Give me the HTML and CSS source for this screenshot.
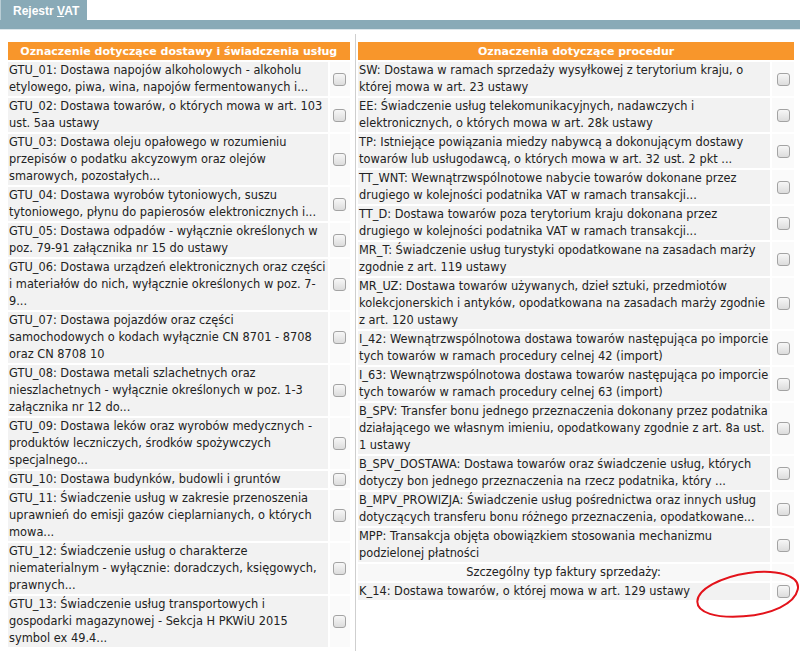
FILE: index.html
```html
<!DOCTYPE html>
<html lang="pl">
<head>
<meta charset="utf-8">
<title>Rejestr VAT</title>
<link rel="stylesheet" href="styles.css">
</head>
<body>
<div class="page">
  <div class="tabs">
    <div class="tab">Rejestr <u>V</u>AT</div>
  </div>
  <div class="tabband"></div>

  <div class="content">
    <div class="col col-left">
      <div class="grid">
        <div class="head">Oznaczenie dotyczące dostawy i świadczenia usług</div>

        <div class="txt">GTU_01: Dostawa napojów alkoholowych - alkoholu<br>etylowego, piwa, wina, napojów fermentowanych i...</div>
        <div class="chk"><input type="checkbox"></div>

        <div class="txt">GTU_02: Dostawa towarów, o których mowa w art. 103<br>ust. 5aa ustawy</div>
        <div class="chk"><input type="checkbox"></div>

        <div class="txt">GTU_03: Dostawa oleju opałowego w rozumieniu<br>przepisów o podatku akcyzowym oraz olejów<br>smarowych, pozostałych...</div>
        <div class="chk"><input type="checkbox"></div>

        <div class="txt">GTU_04: Dostawa wyrobów tytoniowych, suszu<br>tytoniowego, płynu do papierosów elektronicznych i...</div>
        <div class="chk"><input type="checkbox"></div>

        <div class="txt">GTU_05: Dostawa odpadów - wyłącznie określonych w<br>poz. 79-91 załącznika nr 15 do ustawy</div>
        <div class="chk"><input type="checkbox"></div>

        <div class="txt">GTU_06: Dostawa urządzeń elektronicznych oraz części<br>i materiałów do nich, wyłącznie określonych w poz. 7-<br>9...</div>
        <div class="chk"><input type="checkbox"></div>

        <div class="txt">GTU_07: Dostawa pojazdów oraz części<br>samochodowych o kodach wyłącznie CN 8701 - 8708<br>oraz CN 8708 10</div>
        <div class="chk"><input type="checkbox"></div>

        <div class="txt">GTU_08: Dostawa metali szlachetnych oraz<br>nieszlachetnych - wyłącznie określonych w poz. 1-3<br>załącznika nr 12 do...</div>
        <div class="chk"><input type="checkbox"></div>

        <div class="txt">GTU_09: Dostawa leków oraz wyrobów medycznych -<br>produktów leczniczych, środków spożywczych<br>specjalnego...</div>
        <div class="chk"><input type="checkbox"></div>

        <div class="txt">GTU_10: Dostawa budynków, budowli i gruntów</div>
        <div class="chk"><input type="checkbox"></div>

        <div class="txt">GTU_11: Świadczenie usług w zakresie przenoszenia<br>uprawnień do emisji gazów cieplarnianych, o których<br>mowa...</div>
        <div class="chk"><input type="checkbox"></div>

        <div class="txt">GTU_12: Świadczenie usług o charakterze<br>niematerialnym - wyłącznie: doradczych, księgowych,<br>prawnych...</div>
        <div class="chk"><input type="checkbox"></div>

        <div class="txt">GTU_13: Świadczenie usług transportowych i<br>gospodarki magazynowej - Sekcja H PKWiU 2015<br>symbol ex 49.4...</div>
        <div class="chk"><input type="checkbox"></div>
      </div>
    </div>

    <div class="col col-right">
      <div class="grid grid-right">
        <div class="head">Oznaczenia dotyczące procedur</div>

        <div class="txt">SW: Dostawa w ramach sprzedaży wysyłkowej z terytorium kraju, o<br>której mowa w art. 23 ustawy</div>
        <div class="chk"><input type="checkbox"></div>

        <div class="txt">EE: Świadczenie usług telekomunikacyjnych, nadawczych i<br>elektronicznych, o których mowa w art. 28k ustawy</div>
        <div class="chk"><input type="checkbox"></div>

        <div class="txt">TP: Istniejące powiązania miedzy nabywcą a dokonującym dostawy<br>towarów lub usługodawcą, o których mowa w art. 32 ust. 2 pkt ...</div>
        <div class="chk"><input type="checkbox"></div>

        <div class="txt">TT_WNT: Wewnątrzwspólnotowe nabycie towarów dokonane przez<br>drugiego w kolejności podatnika VAT w ramach transakcji...</div>
        <div class="chk"><input type="checkbox"></div>

        <div class="txt">TT_D: Dostawa towarów poza terytorium kraju dokonana przez<br>drugiego w kolejności podatnika VAT w ramach transakcji...</div>
        <div class="chk"><input type="checkbox"></div>

        <div class="txt">MR_T: Świadczenie usług turystyki opodatkowane na zasadach marży<br>zgodnie z art. 119 ustawy</div>
        <div class="chk"><input type="checkbox"></div>

        <div class="txt">MR_UZ: Dostawa towarów używanych, dzieł sztuki, przedmiotów<br>kolekcjonerskich i antyków, opodatkowana na zasadach marży zgodnie<br>z art. 120 ustawy</div>
        <div class="chk"><input type="checkbox"></div>

        <div class="txt">I_42: Wewnątrzwspólnotowa dostawa towarów następująca po imporcie<br>tych towarów w ramach procedury celnej 42 (import)</div>
        <div class="chk"><input type="checkbox"></div>

        <div class="txt">I_63: Wewnątrzwspólnotowa dostawa towarów następująca po imporcie<br>tych towarów w ramach procedury celnej 63 (import)</div>
        <div class="chk"><input type="checkbox"></div>

        <div class="txt">B_SPV: Transfer bonu jednego przeznaczenia dokonany przez podatnika<br>działającego we własnym imieniu, opodatkowany zgodnie z art. 8a ust.<br>1 ustawy</div>
        <div class="chk"><input type="checkbox"></div>

        <div class="txt">B_SPV_DOSTAWA: Dostawa towarów oraz świadczenie usług, których<br>dotyczy bon jednego przeznaczenia na rzecz podatnika, który ...</div>
        <div class="chk"><input type="checkbox"></div>

        <div class="txt">B_MPV_PROWIZJA: Świadczenie usług pośrednictwa oraz innych usług<br>dotyczących transferu bonu różnego przeznaczenia, opodatkowane...</div>
        <div class="chk"><input type="checkbox"></div>

        <div class="txt">MPP: Transakcja objęta obowiązkiem stosowania mechanizmu<br>podzielonej płatności</div>
        <div class="chk"><input type="checkbox"></div>

        <div class="txt subhead">Szczególny typ faktury sprzedaży:</div>
        <div class="chk chk-empty"></div>

        <div class="txt">K_14: Dostawa towarów, o której mowa w art. 129 ustawy</div>
        <div class="chk"><input type="checkbox"></div>
      </div>
    </div>
  </div>

  <svg class="mark" width="112" height="52" viewBox="0 0 112 52">
    <path d="M58 4 C86 2 110 10 106 24 C102 38 78 47 50 47 C22 47 4 40 5 29 C6 17 30 6 58 4 Z" fill="none" stroke="#e3131b" stroke-width="2"/>
  </svg>
</div>
</body>
</html>
```

FILE: styles.css
```css
html, body {
  margin: 0;
  padding: 0;
  background: #fff;
}

.page {
  position: relative;
  width: 800px;
  height: 651px;
  overflow: hidden;
  font-family: "DejaVu Sans", Verdana, sans-serif;
  font-size: 11.4px;
  color: #222;
}

/* tab strip */
.tabs {
  display: flex;
  height: 20px;
}

.tab {
  width: 74px;
  padding-left: 12px;
  background: #89aab7;
  border-left: 1px solid #b9cdd5;
  color: #fff;
  font-family: "Liberation Sans", Arial, sans-serif;
  font-weight: bold;
  font-size: 12px;
  line-height: 22px;
}

.tab u {
  text-decoration-thickness: 1px;
  text-underline-offset: 1px;
}

.tabband {
  height: 9px;
  background: #89aab7;
  border-bottom: 1px solid #dde6ea;
}

/* two columns */
.content {
  display: flex;
  padding: 4px 8px 0 8px;
  height: 620px;
}

.col {
  padding-top: 8px;
}

.col-left {
  width: 341px;
}

.col-right {
  width: 434px;
  margin-left: 6px;
  padding-left: 2px;
  border-left: 1px solid #cfcfcf;
}

.grid {
  display: grid;
  grid-template-columns: 1fr 20px;
  column-gap: 2px;
  row-gap: 2px;
}

.grid-right {
  grid-template-columns: 1fr 22px;
}

.head {
  grid-column: 1 / -1;
  height: 18px;
  background: #f8962b;
  color: #fff;
  font-weight: bold;
  font-size: 11px;
  line-height: 19px;
  text-align: center;
}

.txt {
  background: #f2f2f2;
  padding: 0 2px 0 1px;
  line-height: 17px;
  white-space: nowrap;
}

.subhead {
  background: #f8f8f8;
  text-align: center;
}

.chk {
  background: #fafafa;
  display: flex;
  align-items: center;
  justify-content: center;
}

.chk input {
  appearance: none;
  -webkit-appearance: none;
  width: 13px;
  height: 13px;
  margin: 0;
  border: 1px solid #a3a3a3;
  border-radius: 3px;
  background: linear-gradient(#f7f7f7, #dcdcdc);
}

/* red annotation ring around the K_14 checkbox */
.mark {
  position: absolute;
  left: 692px;
  top: 569px;
  transform: rotate(-4deg);
}
```
